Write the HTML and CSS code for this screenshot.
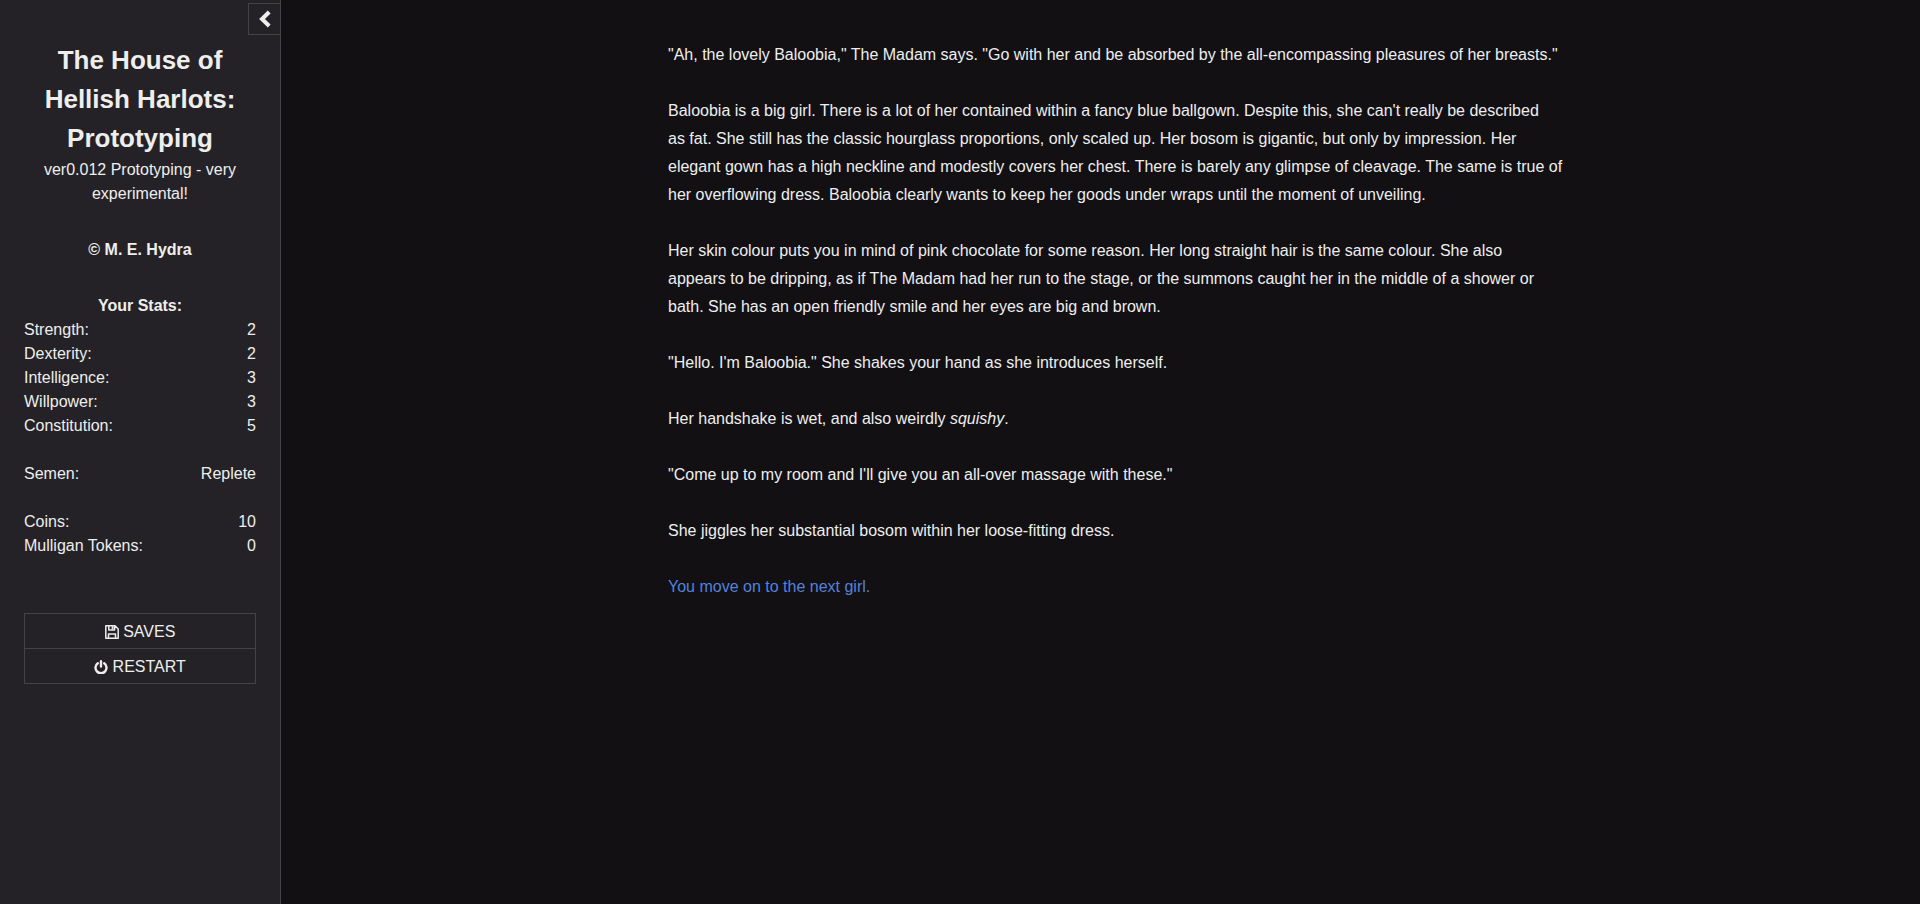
FILE: index.html
```
<!DOCTYPE html>
<html lang="en">
<head>
    <meta charset="UTF-8">
    <title>The House of Hellish Harlots: Prototyping</title>
    <link rel="stylesheet" href="styles.css">
</head>
<body>
    <div id="ui-bar">
        <button id="ui-bar-toggle" type="button" aria-label="Toggle the UI bar">
            <svg class="chevron" viewBox="0 0 14 18"><path d="M11.2 2L4 9l7.2 7"/></svg>
        </button>
        <div id="ui-bar-body">
            <h1 id="story-title">The House of Hellish Harlots: Prototyping</h1>
            <div id="story-subtitle">ver0.012 Prototyping - very experimental!</div>
            <div id="story-author">© M. E. Hydra</div>
            <div id="story-caption">
                <h2>Your Stats:</h2>
                <dl>
                    <div><dt>Strength:</dt><dd>2</dd></div>
                    <div><dt>Dexterity:</dt><dd>2</dd></div>
                    <div><dt>Intelligence:</dt><dd>3</dd></div>
                    <div><dt>Willpower:</dt><dd>3</dd></div>
                    <div><dt>Constitution:</dt><dd>5</dd></div>
                </dl>
                <dl>
                    <div><dt>Semen:</dt><dd>Replete</dd></div>
                </dl>
                <dl>
                    <div><dt>Coins:</dt><dd>10</dd></div>
                    <div><dt>Mulligan Tokens:</dt><dd>0</dd></div>
                </dl>
            </div>
            <ul id="menu">
                <li><a href="#saves">
                    <svg class="icon" viewBox="0 0 14 14"><path fill="none" stroke="currentColor" stroke-width="1.5" stroke-linejoin="round" d="M.8.8h9.2l3.2 3.2v9.2H.8zM3.5 13V9h7v4M3.8 1v4h5.8V1"/><path fill="currentColor" d="M6.6 1.2h1.9v3.2H6.6z"/></svg>
                    Saves</a></li>
                <li><a href="#restart">
                    <svg class="icon" viewBox="0 0 14 14"><path fill="none" stroke="currentColor" stroke-width="2.4" stroke-linecap="round" d="M3.8 3.2a5.5 5.5 0 1 0 6.4 0M7 1.2v5.3"/></svg>
                    Restart</a></li>
            </ul>
        </div>
    </div>
    <main id="story">
        <div id="passages">
            <p>"Ah, the lovely Baloobia," The Madam says. "Go with her and be absorbed by the all-encompassing pleasures of her breasts."</p>
            <p>Baloobia is a big girl. There is a lot of her contained within a fancy blue ballgown. Despite this, she can't really be described<br>
            as fat. She still has the classic hourglass proportions, only scaled up. Her bosom is gigantic, but only by impression. Her<br>
            elegant gown has a high neckline and modestly covers her chest. There is barely any glimpse of cleavage. The same is true of<br>
            her overflowing dress. Baloobia clearly wants to keep her goods under wraps until the moment of unveiling.</p>
            <p>Her skin colour puts you in mind of pink chocolate for some reason. Her long straight hair is the same colour. She also<br>
            appears to be dripping, as if The Madam had her run to the stage, or the summons caught her in the middle of a shower or<br>
            bath. She has an open friendly smile and her eyes are big and brown.</p>
            <p>"Hello. I'm Baloobia." She shakes your hand as she introduces herself.</p>
            <p>Her handshake is wet, and also weirdly <em>squishy</em>.</p>
            <p>"Come up to my room and I'll give you an all-over massage with these."</p>
            <p>She jiggles her substantial bosom within her loose-fitting dress.</p>
            <p><a href="#next">You move on to the next girl.</a></p>
        </div>
    </main>
</body>
</html>
```
FILE: styles.css
```
*{
    box-sizing: border-box;
    margin: 0;
    padding: 0;
}
body{
    display: flex;
    min-height: 100vh;
    background: #121013;
    color: #eee;
    font: 16px/28px "Liberation Sans", Arial, sans-serif;
}
a{
    color: #5482dc;
    text-decoration: none;
}
a:hover{
    text-decoration: underline;
}
#ui-bar{
    position: relative;
    flex: none;
    width: 281px;
    background: #242226;
    border-right: 1px solid #444;
    line-height: 24px;
    text-align: center;
}
#ui-bar-toggle{
    position: absolute;
    top: 3px;
    right: 0;
    width: 32px;
    height: 32px;
    background: transparent;
    border: 1px solid #444;
    border-right: 0;
    color: #eee;
    cursor: pointer;
}
.chevron{
    display: block;
    width: 14px;
    height: 18px;
    margin: 0 auto;
    fill: none;
    stroke: currentColor;
    stroke-width: 4;
}
#ui-bar-body{
    padding: 41px 24px;
}
#story-title{
    font-size: 26px;
    line-height: 39px;
}
#story-author{
    margin: 32px 0;
    font-weight: bold;
}
#story-caption h2{
    font-size: 16px;
}
#story-caption dl + dl{
    margin-top: 24px;
}
#story-caption dl div{
    display: flex;
    justify-content: space-between;
}
#menu{
    margin-top: 55px;
    border: 1px solid #444;
    list-style: none;
    text-transform: uppercase;
}
#menu li + li{
    border-top: 1px solid #444;
}
#menu a{
    display: block;
    padding: 6px 5px 4px;
    color: #eee;
}
.icon{
    width: 14px;
    height: 14px;
    vertical-align: -2px;
}
#story{
    flex: 1;
    padding: 41px 4px 40px 39px;
}
#passages{
    max-width: 900px;
    margin: 0 auto;
}
#passages p{
    margin-bottom: 28px;
}
```
